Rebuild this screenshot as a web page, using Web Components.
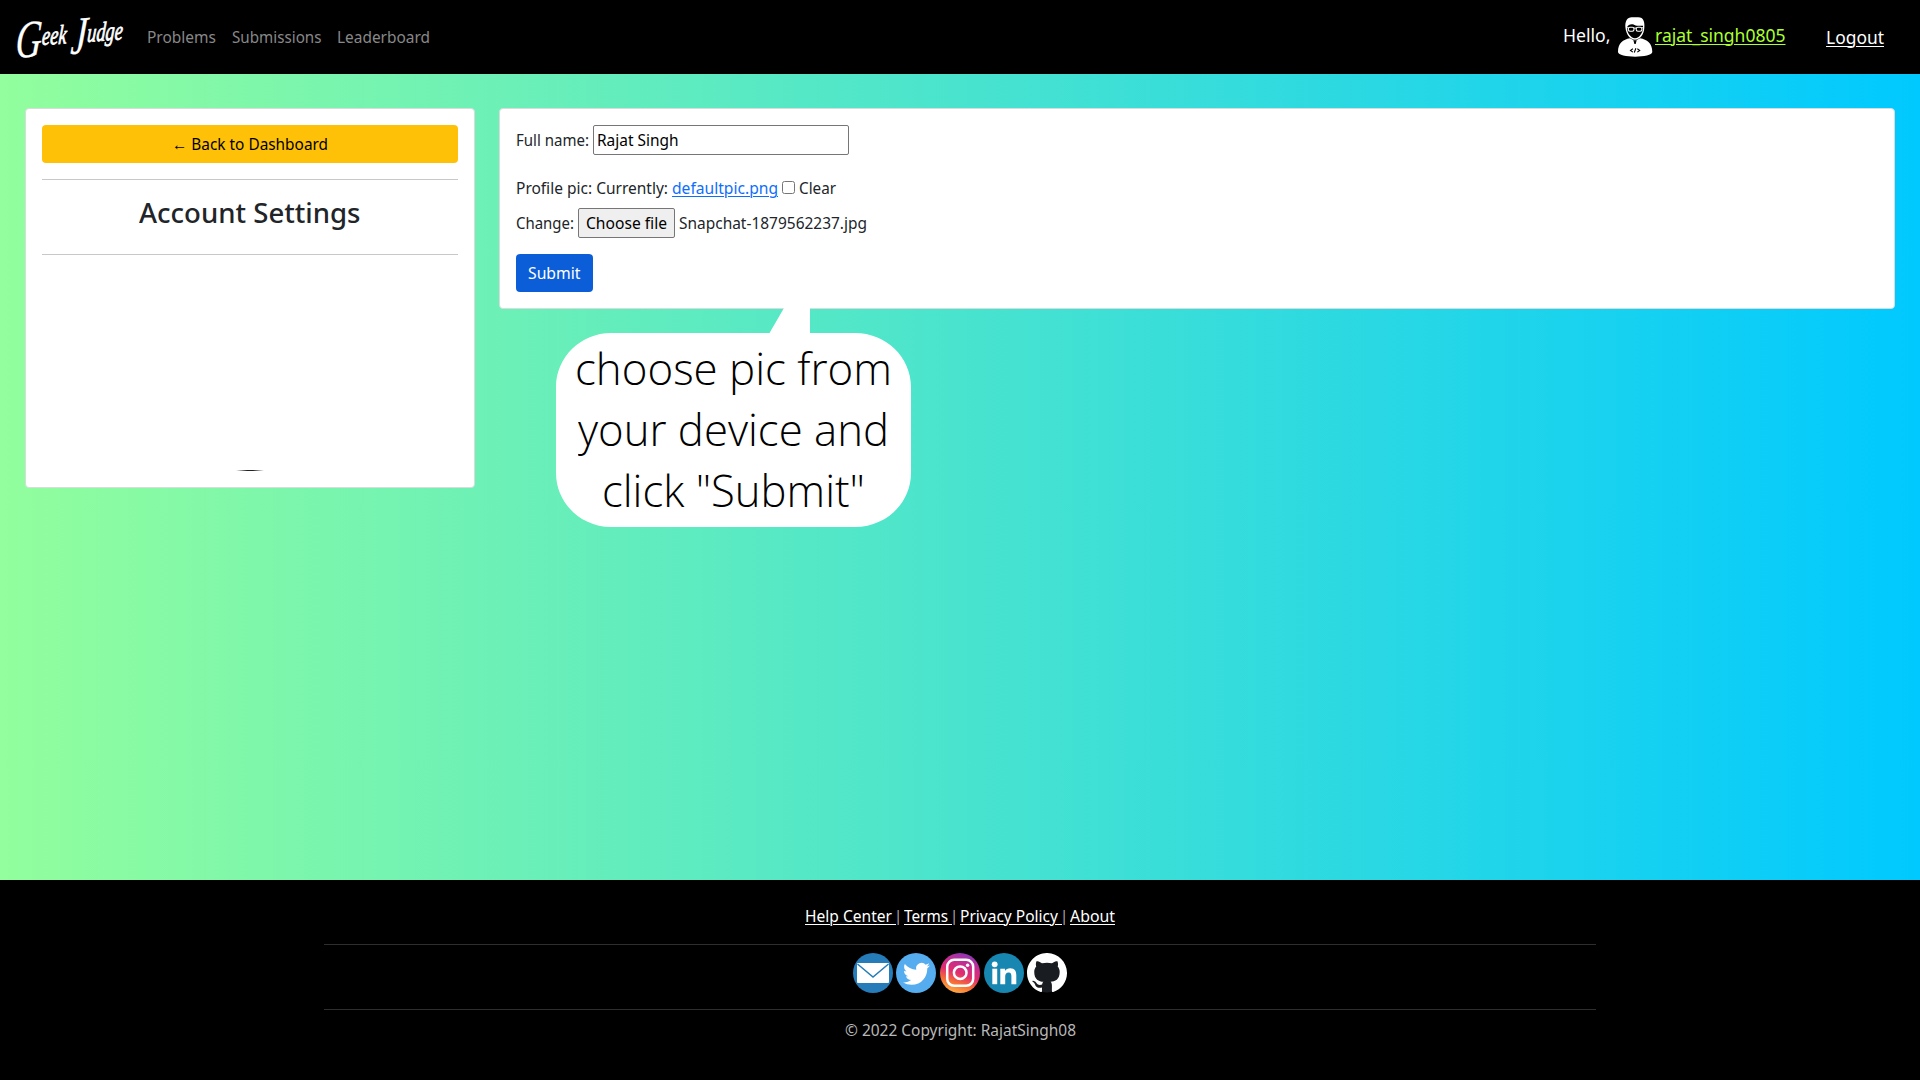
<!DOCTYPE html>
<html lang="en">
<head>
<meta charset="utf-8">
<title>Geek Judge - Account Settings</title>
<style>
html,body{margin:0;padding:0}
body{font:16px/24px "Noto Sans","Open Sans",sans-serif;color:#212529;overflow:hidden;background:#000}
</style>
</head>
<body>
<account-page></account-page>
<script>
/* Text run condensed or widened to an exact advance width. */
class FitText extends HTMLElement{
  connectedCallback(){
    if(this.shadowRoot) return;
    const r=this.attachShadow({mode:'open'});
    r.innerHTML=`<style>:host{display:inline-block;flex:none;white-space:pre;vertical-align:top}
      span{display:inline-block;transform-origin:0 50%;white-space:pre}</style><span><slot></slot></span>`;
    const w=+this.getAttribute('w'), s=r.querySelector('span');
    this.style.width=w+'px';
    s.style.transform=`scaleX(${w/s.getBoundingClientRect().width})`;
  }
}
customElements.define('fit-text',FitText);

const define=(name,html)=>customElements.define(name,class extends HTMLElement{
  connectedCallback(){
    if(this.shadowRoot) return;
    const t=document.createElement('template');
    t.innerHTML=html;
    this.attachShadow({mode:'open'}).appendChild(t.content.cloneNode(true));
  }
});

define('ui-card',`<style>:host{display:block;box-sizing:border-box;background:#fff;background-clip:border-box;border:1px solid #d9dcdb;border-radius:4px;padding:16px}</style><slot></slot>`);

define('user-avatar',`<style>:host{display:block;width:36px;height:42px;flex:none}svg{display:block}</style>
<svg width="36" height="42" viewBox="0 0 36 42">
 <path d="M1 36C1 27 6 23.500 13 22.300L18 25 23 22.300C30 23.500 35.300 27 35.300 36 35.300 42.200 1 42.200 1 36Z" fill="#fff"/>
 <path d="M8.500 12C7.600 5 10.500 1 15 1.200H21C26.500 1 28 6 27.300 12 27 18 23.500 23.300 18 23.800 12.500 23.300 9.200 18 8.500 12Z" fill="#fff"/>
 <path d="M9.900 11.500C11 9 13 8 15.500 8.200 17 8.300 18 9.800 20 9.800H26V12C25.700 17 22.500 21.800 18 22.300 13.500 21.800 10.200 17 9.900 11.500Z" fill="#000"/>
 <path d="M16.300 24 18 25.300 19.700 24 18.700 28H17.400Z" fill="#000"/>
 <g fill="none" stroke="#fff" stroke-width="1.100"><rect x="11.300" y="11.300" width="5.700" height="4" rx="1.700"/><rect x="19.200" y="11.300" width="5.700" height="4" rx="1.700"/><path d="M17 12.300Q18 11.600 19.200 12.300M9 11.700H11.500M24.700 11.700H27"/></g>
 <path d="M15.900 32.700 13.500 34.400 15.900 36.100M20.300 32.700 22.700 34.400 20.300 36.100M18.900 32.300 17.300 36.500" fill="none" stroke="#000" stroke-width="1.100"/>
</svg>`);

define('site-nav',`<style>
:host{display:flex;box-sizing:border-box;height:74px;background:#000;align-items:center;color:#fff;padding-left:16px}
.brand{font:italic 400 27px/43px "Liberation Serif",serif;height:43px;-webkit-text-stroke:.8px #fff;transform:rotate(-4deg) skewX(-8deg);margin-right:22px;margin-bottom:5px}
.brand b{font-weight:400;font-size:53px;line-height:0;vertical-align:-11px;-webkit-text-stroke:.3px #fff}
.links{display:flex;gap:15.500px;color:#888;flex:1}
.user{display:flex;font-size:17.600px;line-height:26px;align-items:center}
.hello{margin-top:-5px;margin-right:6px;margin-left:-1px}
user-avatar{margin:-14px 2px -14px 0;position:relative;top:0}
a{color:inherit;text-decoration:underline;text-decoration-thickness:1px;text-underline-offset:2px}
.name{color:#adff2f;margin-top:-5px;margin-right:41px}
.out{margin-right:36px;margin-top:-1px}
</style>
<fit-text class="brand" w="109"><b>G</b>eek <b>J</b>udge</fit-text>
<nav class="links"><fit-text w="69">Problems</fit-text><fit-text w="89.500">Submissions</fit-text><fit-text w="93">Leaderboard</fit-text></nav>
<div class="user"><fit-text class="hello" w="47.500">Hello,</fit-text><user-avatar></user-avatar>
<fit-text class="name" w="130.500"><a>rajat_singh0805</a></fit-text><fit-text class="out" w="58"><a>Logout</a></fit-text></div>`);

define('settings-panel',`<style>
:host{display:block;width:450px;flex:none}
ui-card{height:380px}
.back{display:flex;height:38px;align-items:center;justify-content:center;background:#ffc107;color:#000;border-radius:4px}
.hr{height:1px;background:#c8c8c9;margin:16px 0}
h3{margin:0;font-weight:500;font-size:27.500px;line-height:34px;display:flex;justify-content:center;height:42px}
.pic{width:28px;height:1px;margin:215px auto 0;background:linear-gradient(90deg,#fff,#222 40%,#222 60%,#fff)}
</style>
<ui-card><div class="back"><fit-text w="156">← Back to Dashboard</fit-text></div><div class="hr"></div>
<h3><fit-text w="221.500">Account Settings</fit-text></h3><div class="hr"></div><div class="pic"></div></ui-card>`);

define('speech-bubble',`<style>
:host{display:block;position:absolute;left:57px;top:200px;width:355px;height:219px}
svg{position:absolute;left:0;top:0}
.t{position:relative;padding-top:29px;display:flex;flex-direction:column;align-items:center;font:300 44.800px/61px "Open Sans",sans-serif;color:#000}
fit-text{height:61px}
</style>
<svg width="355" height="219" viewBox="0 0 355 219"><path d="M228 0H254V25H299C330 25 355 49 355 79V165C355 195 330 219 299 219H55C25 219 0 195 0 165V79C0 49 25 25 55 25H213.500Z" fill="#fff"/></svg>
<div class="t"><fit-text w="317">choose pic from</fit-text><fit-text w="311">your device and</fit-text><fit-text w="263">click "Submit"</fit-text></div>`);

define('profile-form',`<style>
:host{display:block;flex:1;position:relative}
ui-card{height:201px}
.row{display:flex;align-items:center}
.in{box-sizing:border-box;width:256px;height:30px;border:1px solid #767676;border-radius:2px;margin-left:4px;padding:2px 3px;color:#000}
.r1{height:30px;margin-bottom:21px}
.r2{height:24px;margin-bottom:8px}
.r3{height:30px;margin-bottom:16px}
a{color:#0d6efd;text-decoration:underline;text-decoration-thickness:1px;text-underline-offset:2px}
.lk{margin:0 4px}
.cb{box-sizing:border-box;width:13px;height:13px;border:1px solid #767676;border-radius:2.500px;background:#fff;margin:-1px 4px 0 0}
.ch{box-sizing:border-box;width:97px;height:30px;border:1px solid #767676;border-radius:2px;background:#efefef;margin:0 4px;display:flex;align-items:center;justify-content:center;color:#000}
.sub{display:flex;width:77px;height:38px;background:#0b5ed7;border-radius:4px;color:#fff;align-items:center;justify-content:center}
</style>
<ui-card>
<div class="row r1"><fit-text w="73">Full name:</fit-text><div class="in"><fit-text w="81.500">Rajat Singh</fit-text></div></div>
<div class="row r2"><fit-text w="152">Profile pic: Currently:</fit-text><fit-text class="lk" w="106"><a>defaultpic.png</a></fit-text><span class="cb"></span><fit-text w="37">Clear</fit-text></div>
<div class="row r3"><fit-text w="58">Change:</fit-text><span class="ch"><fit-text w="81">Choose file</fit-text></span><fit-text w="188">Snapchat-1879562237.jpg</fit-text></div>
<div class="sub"><fit-text w="52.500">Submit</fit-text></div>
</ui-card><speech-bubble></speech-bubble>`);

define('social-icons',`<style>:host{display:flex;height:40px;justify-content:center}svg{display:block;width:40px;height:40px}
.a{margin-right:3px}.b{margin-right:4px}</style>
<svg class="a" viewBox="0 0 40 40"><circle cx="20" cy="20" r="20" fill="#257cb8"/><rect x="4" y="10" width="32" height="20" rx="1" fill="#fff"/><path d="M4.500 11 20 24 35.500 11" fill="none" stroke="#257cb8" stroke-width="1.500"/></svg>
<svg class="b" viewBox="0 0 40 40"><circle cx="20" cy="20" r="20" fill="#55acee"/><path transform="translate(7 7.400) scale(1.125)" fill="#fff" d="M23.953 4.570a10 10 0 01-2.825.775 4.958 4.958 0 002.163-2.723c-.951.555-2.005.959-3.127 1.184a4.920 4.920 0 00-8.384 4.482C7.690 8.095 4.067 6.130 1.640 3.162a4.822 4.822 0 00-.666 2.475c0 1.710.870 3.213 2.188 4.096a4.904 4.904 0 01-2.228-.616v.060a4.923 4.923 0 003.946 4.827 4.996 4.996 0 01-2.212.085 4.936 4.936 0 004.604 3.417 9.867 9.867 0 01-6.102 2.105c-.390 0-.779-.023-1.170-.067a13.995 13.995 0 007.557 2.209c9.053 0 13.998-7.496 13.998-13.985 0-.210 0-.420-.015-.630A9.935 9.935 0 0024 4.590z"/></svg>
<svg class="b" viewBox="0 0 40 40"><defs><linearGradient id="g" x1=".3" y1="1" x2=".65" y2="0"><stop offset="0" stop-color="#fdb045"/><stop offset=".25" stop-color="#f77035"/><stop offset=".5" stop-color="#e02d70"/><stop offset=".75" stop-color="#c42d92"/><stop offset="1" stop-color="#8a38b8"/></linearGradient></defs><circle cx="20" cy="20" r="20" fill="url(#g)"/><g fill="none" stroke="#fff" stroke-width="2.500"><rect x="7.200" y="6.800" width="26" height="26" rx="7"/><circle cx="20.200" cy="19.700" r="6.300"/></g><circle cx="27.600" cy="12.200" r="1.700" fill="#fff"/></svg>
<svg class="a" viewBox="0 0 40 40"><circle cx="20" cy="20" r="20" fill="#1787b2"/><circle cx="10.700" cy="11.300" r="2.900" fill="#fff"/><rect x="8.300" y="15.700" width="4.900" height="15.500" fill="#fff"/><path d="M16.300 15.700H21V17.900C22 16.200 23.800 15.300 26.200 15.300 30.900 15.300 32.300 18.300 32.300 22.500V31.200H27.400V23.500C27.400 21.500 27.100 19.500 24.700 19.500 22 19.500 21.200 21.400 21.200 23.500V31.200H16.300Z" fill="#fff"/></svg>
<svg viewBox="0 0 40 40"><circle cx="20" cy="20" r="19.500" fill="#191d21"/><path transform="translate(0 -.5) scale(1.6667)" fill="#fff" d="M12 .297c-6.630 0-12 5.373-12 12 0 5.303 3.438 9.800 8.205 11.385.600.113.820-.258.820-.577 0-.285-.010-1.040-.015-2.040-3.338.724-4.042-1.610-4.042-1.610C4.422 18.070 3.633 17.700 3.633 17.700c-1.087-.744.084-.729.084-.729 1.205.084 1.838 1.236 1.838 1.236 1.070 1.835 2.809 1.305 3.495.998.108-.776.417-1.305.760-1.605-2.665-.300-5.466-1.332-5.466-5.930 0-1.310.465-2.380 1.235-3.220-.135-.303-.540-1.523.105-3.176 0 0 1.005-.322 3.300 1.230.960-.267 1.980-.399 3-.405 1.020.006 2.040.138 3 .405 2.280-1.552 3.285-1.230 3.285-1.230.645 1.653.240 2.873.120 3.176.765.840 1.230 1.910 1.230 3.220 0 4.610-2.805 5.625-5.475 5.920.420.360.810 1.096.810 2.220 0 1.606-.015 2.896-.015 3.286 0 .315.210.690.825.570C20.565 22.092 24 17.592 24 12.297c0-6.627-5.373-12-12-12"/></svg>`);

define('site-footer',`<style>
:host{display:block;box-sizing:border-box;height:200px;background:#000;padding:24px 324px 0;color:#b8b8b8}
.l{display:flex;justify-content:center;height:24px;margin-bottom:16px}
a{color:#fff;text-decoration:underline;text-decoration-thickness:1px;text-underline-offset:2px}
.bar{width:4px;font-size:14px;display:flex;justify-content:center;line-height:23px;margin:0 4px 0 0}
.hr{height:1px;background:#2e2e2e}
social-icons{margin:8px 0 16px}
.c{display:flex;justify-content:center;padding-top:8px}
</style>
<div class="l"><fit-text w="91"><a>Help Center </a></fit-text><span class="bar">|</span><fit-text w="48"><a>Terms </a></fit-text><span class="bar">|</span><fit-text w="102"><a>Privacy Policy </a></fit-text><span class="bar">|</span><fit-text w="45"><a>About</a></fit-text></div>
<div class="hr"></div><social-icons></social-icons><div class="hr"></div>
<div class="c"><fit-text w="231">© 2022 Copyright: RajatSingh08</fit-text></div>`);

define('account-page',`<style>
:host{display:flex;flex-direction:column;height:1080px;width:1920px}
main{flex:1;display:flex;align-items:flex-start;gap:24px;padding:34px 25px 0;background:linear-gradient(90deg,#92fe9d 0%,#00c9ff 100%)}
</style><site-nav></site-nav><main><settings-panel></settings-panel><profile-form></profile-form></main><site-footer></site-footer>`);
</script>
</body>
</html>
